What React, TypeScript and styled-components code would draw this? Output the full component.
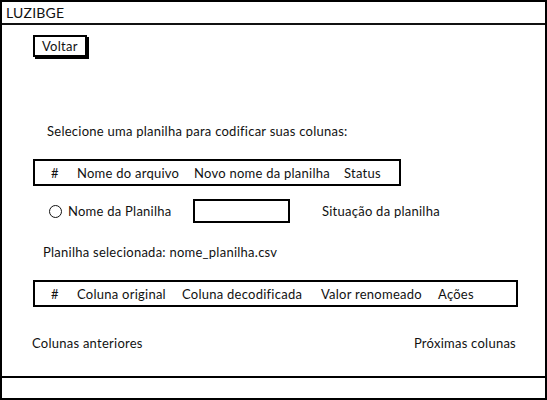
import React from "react";
import styled, { createGlobalStyle } from "styled-components";

const Global = createGlobalStyle`
  html, body { margin: 0; padding: 0; background: #fff; }
  body { font-family: "Lato", "Liberation Sans", sans-serif; color: #111; }
  * { box-sizing: border-box; }
`;

const Window = styled.div`
  width: 547px;
  height: 400px;
  border: 2px solid #000;
  display: flex;
  flex-direction: column;
  font-size: 13px;
  letter-spacing: 0.25px;
`;

const TitleBar = styled.div`
  height: 23px;
  border-bottom: 2px solid #111;
  display: flex;
  align-items: center;
  padding-left: 4px;
  font-size: 14px;
  letter-spacing: 0.2px;
`;

const Body = styled.div`
  flex: 1;
  display: flex;
  flex-direction: column;
  align-items: flex-start;
`;

const Button = styled.button`
  margin: 10px 0 0 31px;
  height: 22px;
  padding: 0 7px;
  border: 2px solid #000;
  background: #fff;
  box-shadow: 2px 2px 0 #000;
  font: inherit;
  font-size: 13px;
  letter-spacing: 0.25px;
  color: #111;
`;

const Text = styled.div<{ $left: number; $top: number }>`
  margin: ${(p) => p.$top}px 0 0 ${(p) => p.$left}px;
  line-height: 16px;
  white-space: nowrap;
`;

const TableHeader = styled.div<{ $width: number; $top: number }>`
  margin: ${(p) => p.$top}px 0 0 31px;
  width: ${(p) => p.$width}px;
  height: 27px;
  border: 2px solid #000;
  display: flex;
  align-items: center;
  padding-left: 16px;
  white-space: nowrap;
`;

const Cell = styled.span<{ $w: number }>`
  width: ${(p) => p.$w}px;
  flex: none;
`;

const RadioRow = styled.div`
  margin: 13px 0 0 47px;
  display: flex;
  align-items: center;
  height: 24px;
`;

const Radio = styled.span`
  width: 13px;
  height: 13px;
  border: 1.5px solid #111;
  border-radius: 50%;
  margin-right: 6px;
`;

const RadioLabel = styled.span`
  width: 125px;
`;

const Input = styled.div`
  width: 97px;
  height: 24px;
  border: 2px solid #000;
  margin-right: 32px;
`;

const NavRow = styled.div`
  margin: 28px 0 0 30px;
  width: 484px;
  display: flex;
  justify-content: space-between;
  line-height: 16px;
`;

const Footer = styled.div`
  height: 22px;
  border-top: 2px solid #000;
`;

export default function App() {
  return (
    <>
      <Global />
      <Window>
        <TitleBar>LUZIBGE</TitleBar>
        <Body>
          <Button>Voltar</Button>
          <Text $left={45} $top={66}>Selecione uma planilha para codificar suas colunas:</Text>
          <TableHeader $width={368} $top={20}>
            <Cell $w={26}>#</Cell>
            <Cell $w={117}>Nome do arquivo</Cell>
            <Cell $w={150}>Novo nome da planilha</Cell>
            <Cell $w={50}>Status</Cell>
          </TableHeader>
          <RadioRow>
            <Radio />
            <RadioLabel>Nome da Planilha</RadioLabel>
            <Input />
            <span>Situação da planilha</span>
          </RadioRow>
          <Text $left={41} $top={21}>Planilha selecionada: nome_planilha.csv</Text>
          <TableHeader $width={485} $top={20}>
            <Cell $w={26}>#</Cell>
            <Cell $w={105}>Coluna original</Cell>
            <Cell $w={139}>Coluna decodificada</Cell>
            <Cell $w={117}>Valor renomeado</Cell>
            <Cell $w={50}>Ações</Cell>
          </TableHeader>
          <NavRow>
            <span>Colunas anteriores</span>
            <span>Próximas colunas</span>
          </NavRow>
        </Body>
        <Footer />
      </Window>
    </>
  );
}
